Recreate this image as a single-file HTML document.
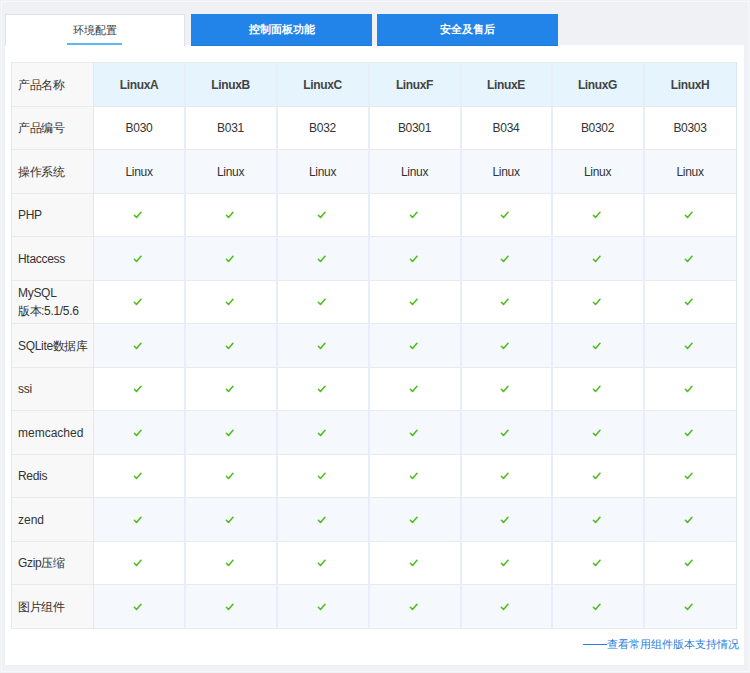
<!DOCTYPE html>
<html><head><meta charset="utf-8">
<style>
html,body{margin:0;padding:0}
body{width:750px;height:673px;overflow:hidden;background:#eff1f4;position:relative;font-family:"Liberation Sans",sans-serif;color:#333}
.outline{position:absolute;left:1px;top:1px;width:746px;height:669px;border:1px solid #f7f8f9}
.panel{position:absolute;left:5px;top:45px;width:739px;height:620px;background:#fff}
.tab{position:absolute;top:14px;height:31px;width:181px;text-align:center;font-size:11.3px;font-weight:700;line-height:31px}
.tab1{left:5px;width:180px;background:#fff;border:1px solid #e2e2e2;border-bottom:none;box-sizing:border-box;height:32px;color:#3a3a3a;font-weight:500}
.tab2,.tab3{background:#2284e9;color:#fff;border-bottom:1px solid #1b7ae2;box-sizing:border-box;height:32px}
.uline{position:absolute;left:67px;top:43px;width:55px;height:2px;background:#5cb9ef}
.bg{position:absolute}
.hl{position:absolute;left:11px;width:726px;height:1px;background:#e8eaeb}
.vl{position:absolute;top:62px;width:1px;height:567px}
.lab{position:absolute;left:18px;width:74px;display:flex;align-items:center;font-size:12px;line-height:18px;color:#333;letter-spacing:-0.3px}
.z{font-size:12px;letter-spacing:-0.5px;font-weight:500}
.cell{position:absolute;display:flex;align-items:center;justify-content:center;font-size:12px;color:#333;letter-spacing:-0.3px}
.cell b{font-weight:bold;color:#444;letter-spacing:-0.35px}
.ck{position:absolute;display:block}
.link{position:absolute;right:11px;top:636px;font-size:11.1px;line-height:16px;color:#2a7ce0;white-space:nowrap}
</style></head><body>
<div class="outline"></div>
<div class="panel"></div>
<div class="tab tab1">环境配置</div>
<div class="uline"></div>
<div class="tab tab2" style="left:191px">控制面板功能</div>
<div class="tab tab3" style="left:377px">安全及售后</div>
<div class="bg" style="left:93px;top:62px;width:643px;height:44px;background:#e6f4fd"></div><div class="bg" style="left:93px;top:106px;width:643px;height:43px;background:#ffffff"></div><div class="bg" style="left:93px;top:149px;width:643px;height:44px;background:#f5f9fe"></div><div class="bg" style="left:93px;top:193px;width:643px;height:43px;background:#ffffff"></div><div class="bg" style="left:93px;top:236px;width:643px;height:44px;background:#f5f9fe"></div><div class="bg" style="left:93px;top:280px;width:643px;height:43px;background:#ffffff"></div><div class="bg" style="left:93px;top:323px;width:643px;height:44px;background:#f5f9fe"></div><div class="bg" style="left:93px;top:367px;width:643px;height:43px;background:#ffffff"></div><div class="bg" style="left:93px;top:410px;width:643px;height:44px;background:#f5f9fe"></div><div class="bg" style="left:93px;top:454px;width:643px;height:43px;background:#ffffff"></div><div class="bg" style="left:93px;top:497px;width:643px;height:44px;background:#f5f9fe"></div><div class="bg" style="left:93px;top:541px;width:643px;height:43px;background:#ffffff"></div><div class="bg" style="left:93px;top:584px;width:643px;height:44px;background:#f5f9fe"></div><div class="bg" style="left:11px;top:62px;width:82px;height:566px;background:#f8f8f8"></div><div class="hl" style="top:62px"></div><div class="hl" style="top:106px"></div><div class="hl" style="top:149px"></div><div class="hl" style="top:193px"></div><div class="hl" style="top:236px"></div><div class="hl" style="top:280px"></div><div class="hl" style="top:323px"></div><div class="hl" style="top:367px"></div><div class="hl" style="top:410px"></div><div class="hl" style="top:454px"></div><div class="hl" style="top:497px"></div><div class="hl" style="top:541px"></div><div class="hl" style="top:584px"></div><div class="hl" style="top:628px"></div><div class="vl" style="left:11px;background:#e6e6e6"></div><div class="vl" style="left:93px;background:#e6e6e6"></div><div class="vl" style="left:184px;width:2px;background:#e7eef9"></div><div class="vl" style="left:276px;width:2px;background:#e7eef9"></div><div class="vl" style="left:368px;width:2px;background:#e7eef9"></div><div class="vl" style="left:460px;width:2px;background:#e7eef9"></div><div class="vl" style="left:551px;width:2px;background:#e7eef9"></div><div class="vl" style="left:643px;width:2px;background:#e7eef9"></div><div class="vl" style="left:736px;background:#dbe6f5"></div><div class="lab" style="top:63px;height:43px"><span><span class="z">产品名称</span></span></div><div class="cell" style="left:94px;top:63px;width:90px;height:43px"><b>LinuxA</b></div><div class="cell" style="left:185px;top:63px;width:91px;height:43px"><b>LinuxB</b></div><div class="cell" style="left:277px;top:63px;width:91px;height:43px"><b>LinuxC</b></div><div class="cell" style="left:369px;top:63px;width:91px;height:43px"><b>LinuxF</b></div><div class="cell" style="left:461px;top:63px;width:90px;height:43px"><b>LinuxE</b></div><div class="cell" style="left:552px;top:63px;width:91px;height:43px"><b>LinuxG</b></div><div class="cell" style="left:644px;top:63px;width:92px;height:43px"><b>LinuxH</b></div><div class="lab" style="top:107px;height:42px"><span><span class="z">产品编号</span></span></div><div class="cell" style="left:94px;top:107px;width:90px;height:42px">B030</div><div class="cell" style="left:185px;top:107px;width:91px;height:42px">B031</div><div class="cell" style="left:277px;top:107px;width:91px;height:42px">B032</div><div class="cell" style="left:369px;top:107px;width:91px;height:42px">B0301</div><div class="cell" style="left:461px;top:107px;width:90px;height:42px">B034</div><div class="cell" style="left:552px;top:107px;width:91px;height:42px">B0302</div><div class="cell" style="left:644px;top:107px;width:92px;height:42px">B0303</div><div class="lab" style="top:150px;height:43px"><span><span class="z">操作系统</span></span></div><div class="cell" style="left:94px;top:150px;width:90px;height:43px">Linux</div><div class="cell" style="left:185px;top:150px;width:91px;height:43px">Linux</div><div class="cell" style="left:277px;top:150px;width:91px;height:43px">Linux</div><div class="cell" style="left:369px;top:150px;width:91px;height:43px">Linux</div><div class="cell" style="left:461px;top:150px;width:90px;height:43px">Linux</div><div class="cell" style="left:552px;top:150px;width:91px;height:43px">Linux</div><div class="cell" style="left:644px;top:150px;width:92px;height:43px">Linux</div><div class="lab" style="top:194px;height:42px"><span>PHP</span></div><svg class="ck" style="left:132.75px;top:210.98px" width="10" height="9" viewBox="0 0 10 9"><path d="M1.4 4.3 L3.5 6.5 L8.0 1.3" fill="none" stroke="#52bd1f" stroke-width="1.6" stroke-linecap="round" stroke-linejoin="round"/></svg><svg class="ck" style="left:224.75px;top:210.98px" width="10" height="9" viewBox="0 0 10 9"><path d="M1.4 4.3 L3.5 6.5 L8.0 1.3" fill="none" stroke="#52bd1f" stroke-width="1.6" stroke-linecap="round" stroke-linejoin="round"/></svg><svg class="ck" style="left:316.75px;top:210.98px" width="10" height="9" viewBox="0 0 10 9"><path d="M1.4 4.3 L3.5 6.5 L8.0 1.3" fill="none" stroke="#52bd1f" stroke-width="1.6" stroke-linecap="round" stroke-linejoin="round"/></svg><svg class="ck" style="left:408.75px;top:210.98px" width="10" height="9" viewBox="0 0 10 9"><path d="M1.4 4.3 L3.5 6.5 L8.0 1.3" fill="none" stroke="#52bd1f" stroke-width="1.6" stroke-linecap="round" stroke-linejoin="round"/></svg><svg class="ck" style="left:500.25px;top:210.98px" width="10" height="9" viewBox="0 0 10 9"><path d="M1.4 4.3 L3.5 6.5 L8.0 1.3" fill="none" stroke="#52bd1f" stroke-width="1.6" stroke-linecap="round" stroke-linejoin="round"/></svg><svg class="ck" style="left:591.75px;top:210.98px" width="10" height="9" viewBox="0 0 10 9"><path d="M1.4 4.3 L3.5 6.5 L8.0 1.3" fill="none" stroke="#52bd1f" stroke-width="1.6" stroke-linecap="round" stroke-linejoin="round"/></svg><svg class="ck" style="left:684.25px;top:210.98px" width="10" height="9" viewBox="0 0 10 9"><path d="M1.4 4.3 L3.5 6.5 L8.0 1.3" fill="none" stroke="#52bd1f" stroke-width="1.6" stroke-linecap="round" stroke-linejoin="round"/></svg><div class="lab" style="top:237px;height:43px"><span>Htaccess</span></div><svg class="ck" style="left:132.75px;top:254.52px" width="10" height="9" viewBox="0 0 10 9"><path d="M1.4 4.3 L3.5 6.5 L8.0 1.3" fill="none" stroke="#52bd1f" stroke-width="1.6" stroke-linecap="round" stroke-linejoin="round"/></svg><svg class="ck" style="left:224.75px;top:254.52px" width="10" height="9" viewBox="0 0 10 9"><path d="M1.4 4.3 L3.5 6.5 L8.0 1.3" fill="none" stroke="#52bd1f" stroke-width="1.6" stroke-linecap="round" stroke-linejoin="round"/></svg><svg class="ck" style="left:316.75px;top:254.52px" width="10" height="9" viewBox="0 0 10 9"><path d="M1.4 4.3 L3.5 6.5 L8.0 1.3" fill="none" stroke="#52bd1f" stroke-width="1.6" stroke-linecap="round" stroke-linejoin="round"/></svg><svg class="ck" style="left:408.75px;top:254.52px" width="10" height="9" viewBox="0 0 10 9"><path d="M1.4 4.3 L3.5 6.5 L8.0 1.3" fill="none" stroke="#52bd1f" stroke-width="1.6" stroke-linecap="round" stroke-linejoin="round"/></svg><svg class="ck" style="left:500.25px;top:254.52px" width="10" height="9" viewBox="0 0 10 9"><path d="M1.4 4.3 L3.5 6.5 L8.0 1.3" fill="none" stroke="#52bd1f" stroke-width="1.6" stroke-linecap="round" stroke-linejoin="round"/></svg><svg class="ck" style="left:591.75px;top:254.52px" width="10" height="9" viewBox="0 0 10 9"><path d="M1.4 4.3 L3.5 6.5 L8.0 1.3" fill="none" stroke="#52bd1f" stroke-width="1.6" stroke-linecap="round" stroke-linejoin="round"/></svg><svg class="ck" style="left:684.25px;top:254.52px" width="10" height="9" viewBox="0 0 10 9"><path d="M1.4 4.3 L3.5 6.5 L8.0 1.3" fill="none" stroke="#52bd1f" stroke-width="1.6" stroke-linecap="round" stroke-linejoin="round"/></svg><div class="lab" style="top:281px;height:42px"><span>MySQL<br><span class="z">版本</span>:5.1/5.6</span></div><svg class="ck" style="left:132.75px;top:298.06px" width="10" height="9" viewBox="0 0 10 9"><path d="M1.4 4.3 L3.5 6.5 L8.0 1.3" fill="none" stroke="#52bd1f" stroke-width="1.6" stroke-linecap="round" stroke-linejoin="round"/></svg><svg class="ck" style="left:224.75px;top:298.06px" width="10" height="9" viewBox="0 0 10 9"><path d="M1.4 4.3 L3.5 6.5 L8.0 1.3" fill="none" stroke="#52bd1f" stroke-width="1.6" stroke-linecap="round" stroke-linejoin="round"/></svg><svg class="ck" style="left:316.75px;top:298.06px" width="10" height="9" viewBox="0 0 10 9"><path d="M1.4 4.3 L3.5 6.5 L8.0 1.3" fill="none" stroke="#52bd1f" stroke-width="1.6" stroke-linecap="round" stroke-linejoin="round"/></svg><svg class="ck" style="left:408.75px;top:298.06px" width="10" height="9" viewBox="0 0 10 9"><path d="M1.4 4.3 L3.5 6.5 L8.0 1.3" fill="none" stroke="#52bd1f" stroke-width="1.6" stroke-linecap="round" stroke-linejoin="round"/></svg><svg class="ck" style="left:500.25px;top:298.06px" width="10" height="9" viewBox="0 0 10 9"><path d="M1.4 4.3 L3.5 6.5 L8.0 1.3" fill="none" stroke="#52bd1f" stroke-width="1.6" stroke-linecap="round" stroke-linejoin="round"/></svg><svg class="ck" style="left:591.75px;top:298.06px" width="10" height="9" viewBox="0 0 10 9"><path d="M1.4 4.3 L3.5 6.5 L8.0 1.3" fill="none" stroke="#52bd1f" stroke-width="1.6" stroke-linecap="round" stroke-linejoin="round"/></svg><svg class="ck" style="left:684.25px;top:298.06px" width="10" height="9" viewBox="0 0 10 9"><path d="M1.4 4.3 L3.5 6.5 L8.0 1.3" fill="none" stroke="#52bd1f" stroke-width="1.6" stroke-linecap="round" stroke-linejoin="round"/></svg><div class="lab" style="top:324px;height:43px"><span>SQLite<span class="z">数据库</span></span></div><svg class="ck" style="left:132.75px;top:341.60px" width="10" height="9" viewBox="0 0 10 9"><path d="M1.4 4.3 L3.5 6.5 L8.0 1.3" fill="none" stroke="#52bd1f" stroke-width="1.6" stroke-linecap="round" stroke-linejoin="round"/></svg><svg class="ck" style="left:224.75px;top:341.60px" width="10" height="9" viewBox="0 0 10 9"><path d="M1.4 4.3 L3.5 6.5 L8.0 1.3" fill="none" stroke="#52bd1f" stroke-width="1.6" stroke-linecap="round" stroke-linejoin="round"/></svg><svg class="ck" style="left:316.75px;top:341.60px" width="10" height="9" viewBox="0 0 10 9"><path d="M1.4 4.3 L3.5 6.5 L8.0 1.3" fill="none" stroke="#52bd1f" stroke-width="1.6" stroke-linecap="round" stroke-linejoin="round"/></svg><svg class="ck" style="left:408.75px;top:341.60px" width="10" height="9" viewBox="0 0 10 9"><path d="M1.4 4.3 L3.5 6.5 L8.0 1.3" fill="none" stroke="#52bd1f" stroke-width="1.6" stroke-linecap="round" stroke-linejoin="round"/></svg><svg class="ck" style="left:500.25px;top:341.60px" width="10" height="9" viewBox="0 0 10 9"><path d="M1.4 4.3 L3.5 6.5 L8.0 1.3" fill="none" stroke="#52bd1f" stroke-width="1.6" stroke-linecap="round" stroke-linejoin="round"/></svg><svg class="ck" style="left:591.75px;top:341.60px" width="10" height="9" viewBox="0 0 10 9"><path d="M1.4 4.3 L3.5 6.5 L8.0 1.3" fill="none" stroke="#52bd1f" stroke-width="1.6" stroke-linecap="round" stroke-linejoin="round"/></svg><svg class="ck" style="left:684.25px;top:341.60px" width="10" height="9" viewBox="0 0 10 9"><path d="M1.4 4.3 L3.5 6.5 L8.0 1.3" fill="none" stroke="#52bd1f" stroke-width="1.6" stroke-linecap="round" stroke-linejoin="round"/></svg><div class="lab" style="top:368px;height:42px"><span>ssi</span></div><svg class="ck" style="left:132.75px;top:385.14px" width="10" height="9" viewBox="0 0 10 9"><path d="M1.4 4.3 L3.5 6.5 L8.0 1.3" fill="none" stroke="#52bd1f" stroke-width="1.6" stroke-linecap="round" stroke-linejoin="round"/></svg><svg class="ck" style="left:224.75px;top:385.14px" width="10" height="9" viewBox="0 0 10 9"><path d="M1.4 4.3 L3.5 6.5 L8.0 1.3" fill="none" stroke="#52bd1f" stroke-width="1.6" stroke-linecap="round" stroke-linejoin="round"/></svg><svg class="ck" style="left:316.75px;top:385.14px" width="10" height="9" viewBox="0 0 10 9"><path d="M1.4 4.3 L3.5 6.5 L8.0 1.3" fill="none" stroke="#52bd1f" stroke-width="1.6" stroke-linecap="round" stroke-linejoin="round"/></svg><svg class="ck" style="left:408.75px;top:385.14px" width="10" height="9" viewBox="0 0 10 9"><path d="M1.4 4.3 L3.5 6.5 L8.0 1.3" fill="none" stroke="#52bd1f" stroke-width="1.6" stroke-linecap="round" stroke-linejoin="round"/></svg><svg class="ck" style="left:500.25px;top:385.14px" width="10" height="9" viewBox="0 0 10 9"><path d="M1.4 4.3 L3.5 6.5 L8.0 1.3" fill="none" stroke="#52bd1f" stroke-width="1.6" stroke-linecap="round" stroke-linejoin="round"/></svg><svg class="ck" style="left:591.75px;top:385.14px" width="10" height="9" viewBox="0 0 10 9"><path d="M1.4 4.3 L3.5 6.5 L8.0 1.3" fill="none" stroke="#52bd1f" stroke-width="1.6" stroke-linecap="round" stroke-linejoin="round"/></svg><svg class="ck" style="left:684.25px;top:385.14px" width="10" height="9" viewBox="0 0 10 9"><path d="M1.4 4.3 L3.5 6.5 L8.0 1.3" fill="none" stroke="#52bd1f" stroke-width="1.6" stroke-linecap="round" stroke-linejoin="round"/></svg><div class="lab" style="top:411px;height:43px"><span><span style="letter-spacing:0">memcached</span></span></div><svg class="ck" style="left:132.75px;top:428.68px" width="10" height="9" viewBox="0 0 10 9"><path d="M1.4 4.3 L3.5 6.5 L8.0 1.3" fill="none" stroke="#52bd1f" stroke-width="1.6" stroke-linecap="round" stroke-linejoin="round"/></svg><svg class="ck" style="left:224.75px;top:428.68px" width="10" height="9" viewBox="0 0 10 9"><path d="M1.4 4.3 L3.5 6.5 L8.0 1.3" fill="none" stroke="#52bd1f" stroke-width="1.6" stroke-linecap="round" stroke-linejoin="round"/></svg><svg class="ck" style="left:316.75px;top:428.68px" width="10" height="9" viewBox="0 0 10 9"><path d="M1.4 4.3 L3.5 6.5 L8.0 1.3" fill="none" stroke="#52bd1f" stroke-width="1.6" stroke-linecap="round" stroke-linejoin="round"/></svg><svg class="ck" style="left:408.75px;top:428.68px" width="10" height="9" viewBox="0 0 10 9"><path d="M1.4 4.3 L3.5 6.5 L8.0 1.3" fill="none" stroke="#52bd1f" stroke-width="1.6" stroke-linecap="round" stroke-linejoin="round"/></svg><svg class="ck" style="left:500.25px;top:428.68px" width="10" height="9" viewBox="0 0 10 9"><path d="M1.4 4.3 L3.5 6.5 L8.0 1.3" fill="none" stroke="#52bd1f" stroke-width="1.6" stroke-linecap="round" stroke-linejoin="round"/></svg><svg class="ck" style="left:591.75px;top:428.68px" width="10" height="9" viewBox="0 0 10 9"><path d="M1.4 4.3 L3.5 6.5 L8.0 1.3" fill="none" stroke="#52bd1f" stroke-width="1.6" stroke-linecap="round" stroke-linejoin="round"/></svg><svg class="ck" style="left:684.25px;top:428.68px" width="10" height="9" viewBox="0 0 10 9"><path d="M1.4 4.3 L3.5 6.5 L8.0 1.3" fill="none" stroke="#52bd1f" stroke-width="1.6" stroke-linecap="round" stroke-linejoin="round"/></svg><div class="lab" style="top:455px;height:42px"><span>Redis</span></div><svg class="ck" style="left:132.75px;top:472.22px" width="10" height="9" viewBox="0 0 10 9"><path d="M1.4 4.3 L3.5 6.5 L8.0 1.3" fill="none" stroke="#52bd1f" stroke-width="1.6" stroke-linecap="round" stroke-linejoin="round"/></svg><svg class="ck" style="left:224.75px;top:472.22px" width="10" height="9" viewBox="0 0 10 9"><path d="M1.4 4.3 L3.5 6.5 L8.0 1.3" fill="none" stroke="#52bd1f" stroke-width="1.6" stroke-linecap="round" stroke-linejoin="round"/></svg><svg class="ck" style="left:316.75px;top:472.22px" width="10" height="9" viewBox="0 0 10 9"><path d="M1.4 4.3 L3.5 6.5 L8.0 1.3" fill="none" stroke="#52bd1f" stroke-width="1.6" stroke-linecap="round" stroke-linejoin="round"/></svg><svg class="ck" style="left:408.75px;top:472.22px" width="10" height="9" viewBox="0 0 10 9"><path d="M1.4 4.3 L3.5 6.5 L8.0 1.3" fill="none" stroke="#52bd1f" stroke-width="1.6" stroke-linecap="round" stroke-linejoin="round"/></svg><svg class="ck" style="left:500.25px;top:472.22px" width="10" height="9" viewBox="0 0 10 9"><path d="M1.4 4.3 L3.5 6.5 L8.0 1.3" fill="none" stroke="#52bd1f" stroke-width="1.6" stroke-linecap="round" stroke-linejoin="round"/></svg><svg class="ck" style="left:591.75px;top:472.22px" width="10" height="9" viewBox="0 0 10 9"><path d="M1.4 4.3 L3.5 6.5 L8.0 1.3" fill="none" stroke="#52bd1f" stroke-width="1.6" stroke-linecap="round" stroke-linejoin="round"/></svg><svg class="ck" style="left:684.25px;top:472.22px" width="10" height="9" viewBox="0 0 10 9"><path d="M1.4 4.3 L3.5 6.5 L8.0 1.3" fill="none" stroke="#52bd1f" stroke-width="1.6" stroke-linecap="round" stroke-linejoin="round"/></svg><div class="lab" style="top:498px;height:43px"><span><span style="letter-spacing:0">zend</span></span></div><svg class="ck" style="left:132.75px;top:515.75px" width="10" height="9" viewBox="0 0 10 9"><path d="M1.4 4.3 L3.5 6.5 L8.0 1.3" fill="none" stroke="#52bd1f" stroke-width="1.6" stroke-linecap="round" stroke-linejoin="round"/></svg><svg class="ck" style="left:224.75px;top:515.75px" width="10" height="9" viewBox="0 0 10 9"><path d="M1.4 4.3 L3.5 6.5 L8.0 1.3" fill="none" stroke="#52bd1f" stroke-width="1.6" stroke-linecap="round" stroke-linejoin="round"/></svg><svg class="ck" style="left:316.75px;top:515.75px" width="10" height="9" viewBox="0 0 10 9"><path d="M1.4 4.3 L3.5 6.5 L8.0 1.3" fill="none" stroke="#52bd1f" stroke-width="1.6" stroke-linecap="round" stroke-linejoin="round"/></svg><svg class="ck" style="left:408.75px;top:515.75px" width="10" height="9" viewBox="0 0 10 9"><path d="M1.4 4.3 L3.5 6.5 L8.0 1.3" fill="none" stroke="#52bd1f" stroke-width="1.6" stroke-linecap="round" stroke-linejoin="round"/></svg><svg class="ck" style="left:500.25px;top:515.75px" width="10" height="9" viewBox="0 0 10 9"><path d="M1.4 4.3 L3.5 6.5 L8.0 1.3" fill="none" stroke="#52bd1f" stroke-width="1.6" stroke-linecap="round" stroke-linejoin="round"/></svg><svg class="ck" style="left:591.75px;top:515.75px" width="10" height="9" viewBox="0 0 10 9"><path d="M1.4 4.3 L3.5 6.5 L8.0 1.3" fill="none" stroke="#52bd1f" stroke-width="1.6" stroke-linecap="round" stroke-linejoin="round"/></svg><svg class="ck" style="left:684.25px;top:515.75px" width="10" height="9" viewBox="0 0 10 9"><path d="M1.4 4.3 L3.5 6.5 L8.0 1.3" fill="none" stroke="#52bd1f" stroke-width="1.6" stroke-linecap="round" stroke-linejoin="round"/></svg><div class="lab" style="top:542px;height:42px"><span>Gzip<span class="z">压缩</span></span></div><svg class="ck" style="left:132.75px;top:559.29px" width="10" height="9" viewBox="0 0 10 9"><path d="M1.4 4.3 L3.5 6.5 L8.0 1.3" fill="none" stroke="#52bd1f" stroke-width="1.6" stroke-linecap="round" stroke-linejoin="round"/></svg><svg class="ck" style="left:224.75px;top:559.29px" width="10" height="9" viewBox="0 0 10 9"><path d="M1.4 4.3 L3.5 6.5 L8.0 1.3" fill="none" stroke="#52bd1f" stroke-width="1.6" stroke-linecap="round" stroke-linejoin="round"/></svg><svg class="ck" style="left:316.75px;top:559.29px" width="10" height="9" viewBox="0 0 10 9"><path d="M1.4 4.3 L3.5 6.5 L8.0 1.3" fill="none" stroke="#52bd1f" stroke-width="1.6" stroke-linecap="round" stroke-linejoin="round"/></svg><svg class="ck" style="left:408.75px;top:559.29px" width="10" height="9" viewBox="0 0 10 9"><path d="M1.4 4.3 L3.5 6.5 L8.0 1.3" fill="none" stroke="#52bd1f" stroke-width="1.6" stroke-linecap="round" stroke-linejoin="round"/></svg><svg class="ck" style="left:500.25px;top:559.29px" width="10" height="9" viewBox="0 0 10 9"><path d="M1.4 4.3 L3.5 6.5 L8.0 1.3" fill="none" stroke="#52bd1f" stroke-width="1.6" stroke-linecap="round" stroke-linejoin="round"/></svg><svg class="ck" style="left:591.75px;top:559.29px" width="10" height="9" viewBox="0 0 10 9"><path d="M1.4 4.3 L3.5 6.5 L8.0 1.3" fill="none" stroke="#52bd1f" stroke-width="1.6" stroke-linecap="round" stroke-linejoin="round"/></svg><svg class="ck" style="left:684.25px;top:559.29px" width="10" height="9" viewBox="0 0 10 9"><path d="M1.4 4.3 L3.5 6.5 L8.0 1.3" fill="none" stroke="#52bd1f" stroke-width="1.6" stroke-linecap="round" stroke-linejoin="round"/></svg><div class="lab" style="top:585px;height:43px"><span><span class="z">图片组件</span></span></div><svg class="ck" style="left:132.75px;top:602.83px" width="10" height="9" viewBox="0 0 10 9"><path d="M1.4 4.3 L3.5 6.5 L8.0 1.3" fill="none" stroke="#52bd1f" stroke-width="1.6" stroke-linecap="round" stroke-linejoin="round"/></svg><svg class="ck" style="left:224.75px;top:602.83px" width="10" height="9" viewBox="0 0 10 9"><path d="M1.4 4.3 L3.5 6.5 L8.0 1.3" fill="none" stroke="#52bd1f" stroke-width="1.6" stroke-linecap="round" stroke-linejoin="round"/></svg><svg class="ck" style="left:316.75px;top:602.83px" width="10" height="9" viewBox="0 0 10 9"><path d="M1.4 4.3 L3.5 6.5 L8.0 1.3" fill="none" stroke="#52bd1f" stroke-width="1.6" stroke-linecap="round" stroke-linejoin="round"/></svg><svg class="ck" style="left:408.75px;top:602.83px" width="10" height="9" viewBox="0 0 10 9"><path d="M1.4 4.3 L3.5 6.5 L8.0 1.3" fill="none" stroke="#52bd1f" stroke-width="1.6" stroke-linecap="round" stroke-linejoin="round"/></svg><svg class="ck" style="left:500.25px;top:602.83px" width="10" height="9" viewBox="0 0 10 9"><path d="M1.4 4.3 L3.5 6.5 L8.0 1.3" fill="none" stroke="#52bd1f" stroke-width="1.6" stroke-linecap="round" stroke-linejoin="round"/></svg><svg class="ck" style="left:591.75px;top:602.83px" width="10" height="9" viewBox="0 0 10 9"><path d="M1.4 4.3 L3.5 6.5 L8.0 1.3" fill="none" stroke="#52bd1f" stroke-width="1.6" stroke-linecap="round" stroke-linejoin="round"/></svg><svg class="ck" style="left:684.25px;top:602.83px" width="10" height="9" viewBox="0 0 10 9"><path d="M1.4 4.3 L3.5 6.5 L8.0 1.3" fill="none" stroke="#52bd1f" stroke-width="1.6" stroke-linecap="round" stroke-linejoin="round"/></svg>
<div class="link"><span style="font-size:12px">——</span>查看常用组件版本支持情况</div>
</body></html>
